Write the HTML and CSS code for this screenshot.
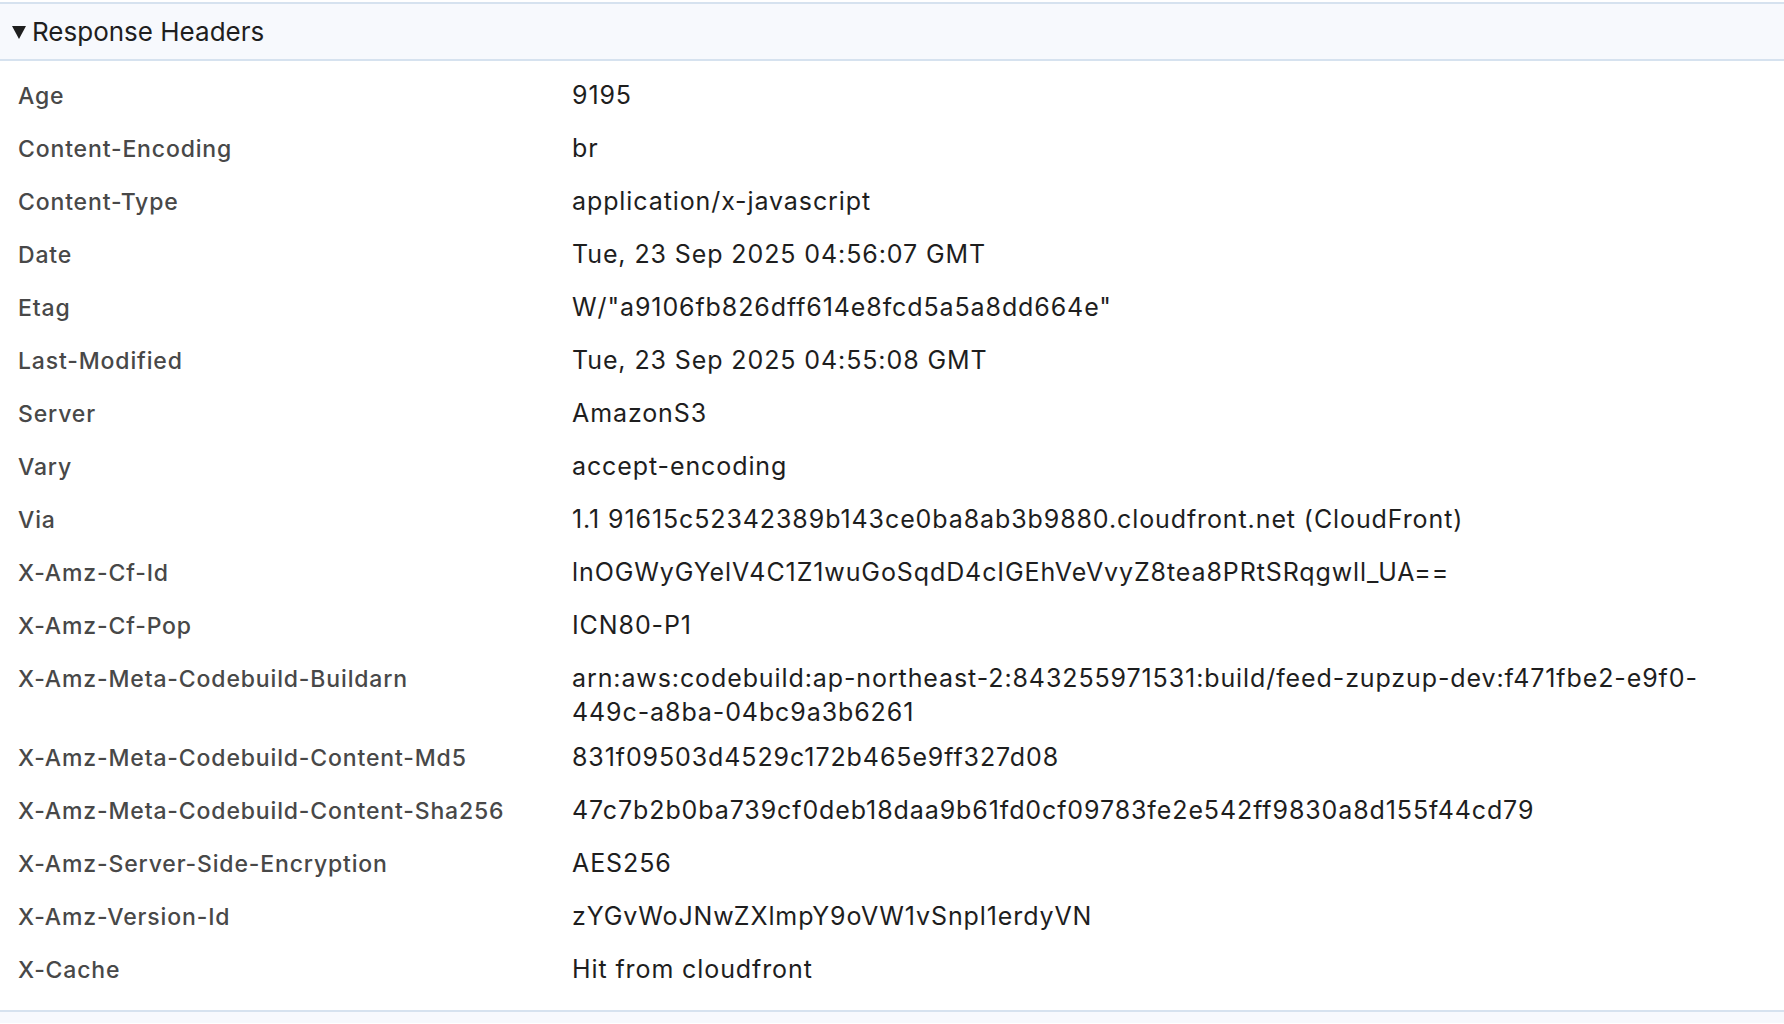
FILE: index.html
```html
<!DOCTYPE html>
<html lang="en">
<head>
<meta charset="utf-8">
<title>Response Headers</title>
<link rel="stylesheet" href="styles.css">
</head>
<body>
<div class="panel">
  <div class="section-header">
    <svg class="disclosure" width="14" height="13" viewBox="0 0 14 13"><polygon points="0,0 14,0 7,13" fill="#1f1f1f"/></svg>
    <span class="title">Response Headers</span>
  </div>
  <div class="pairs">
    <div class="pair"><div class="key">Age</div><div class="value">9195</div></div>
    <div class="pair"><div class="key">Content-Encoding</div><div class="value">br</div></div>
    <div class="pair"><div class="key">Content-Type</div><div class="value">application/x-javascript</div></div>
    <div class="pair"><div class="key">Date</div><div class="value">Tue, 23 Sep 2025 04:56:07 GMT</div></div>
    <div class="pair"><div class="key">Etag</div><div class="value">W/"a9106fb826dff614e8fcd5a5a8dd664e"</div></div>
    <div class="pair"><div class="key">Last-Modified</div><div class="value">Tue, 23 Sep 2025 04:55:08 GMT</div></div>
    <div class="pair"><div class="key">Server</div><div class="value">AmazonS3</div></div>
    <div class="pair"><div class="key">Vary</div><div class="value">accept-encoding</div></div>
    <div class="pair"><div class="key">Via</div><div class="value">1.1 91615c52342389b143ce0ba8ab3b9880.cloudfront.net (CloudFront)</div></div>
    <div class="pair"><div class="key">X-Amz-Cf-Id</div><div class="value">lnOGWyGYelV4C1Z1wuGoSqdD4cIGEhVeVvyZ8tea8PRtSRqgwll_UA==</div></div>
    <div class="pair"><div class="key">X-Amz-Cf-Pop</div><div class="value">ICN80-P1</div></div>
    <div class="pair"><div class="key">X-Amz-Meta-Codebuild-Buildarn</div><div class="value">arn:aws:codebuild:ap-northeast-2:843255971531:build/feed-zupzup-dev:f471fbe2-e9f0-449c-a8ba-04bc9a3b6261</div></div>
    <div class="pair"><div class="key">X-Amz-Meta-Codebuild-Content-Md5</div><div class="value">831f09503d4529c172b465e9ff327d08</div></div>
    <div class="pair"><div class="key">X-Amz-Meta-Codebuild-Content-Sha256</div><div class="value">47c7b2b0ba739cf0deb18daa9b61fd0cf09783fe2e542ff9830a8d155f44cd79</div></div>
    <div class="pair"><div class="key">X-Amz-Server-Side-Encryption</div><div class="value">AES256</div></div>
    <div class="pair"><div class="key">X-Amz-Version-Id</div><div class="value">zYGvWoJNwZXlmpY9oVW1vSnpl1erdyVN</div></div>
    <div class="pair"><div class="key">X-Cache</div><div class="value">Hit from cloudfront</div></div>
  </div>
  <div class="section-footer"></div>
</div>
</body>
</html>
```

FILE: styles.css
```css
html, body {
  margin: 0;
  padding: 0;
  background: #ffffff;
}

body {
  font-family: Inter, "Noto Sans", "Liberation Sans", sans-serif;
  color: #1f1f1f;
}

.panel {
  padding-top: 2px;
}

.section-header {
  display: flex;
  align-items: center;
  height: 55px;
  background: #f7f9fd;
  border-top: 2px solid #d6e2ef;
  border-bottom: 2px solid #d6e2ef;
  padding-left: 12px;
}

.disclosure {
  display: block;
  margin-right: 6px;
  margin-top: 2px;
}

.title {
  font-size: 26px;
  line-height: 30px;
  color: #1f1f1f;
}

.pairs {
  padding: 8px 0 14px;
}

.pair {
  display: grid;
  grid-template-columns: 554px 1fr;
  align-items: start;
  padding: 12px 64px 11px 18px;
}

.key {
  font-size: 23px;
  line-height: 30px;
  font-weight: 500;
  letter-spacing: 0.85px;
  color: #484848;
}

.value {
  font-size: 25px;
  line-height: 34px;
  margin: -2.7px 0 -9.8px;
  letter-spacing: 0.9px;
  color: #1e1e1e;
  overflow-wrap: break-word;
}

.section-footer {
  height: 11px;
  background: #f7f9fd;
  border-top: 2px solid #d6e2ef;
}
```
